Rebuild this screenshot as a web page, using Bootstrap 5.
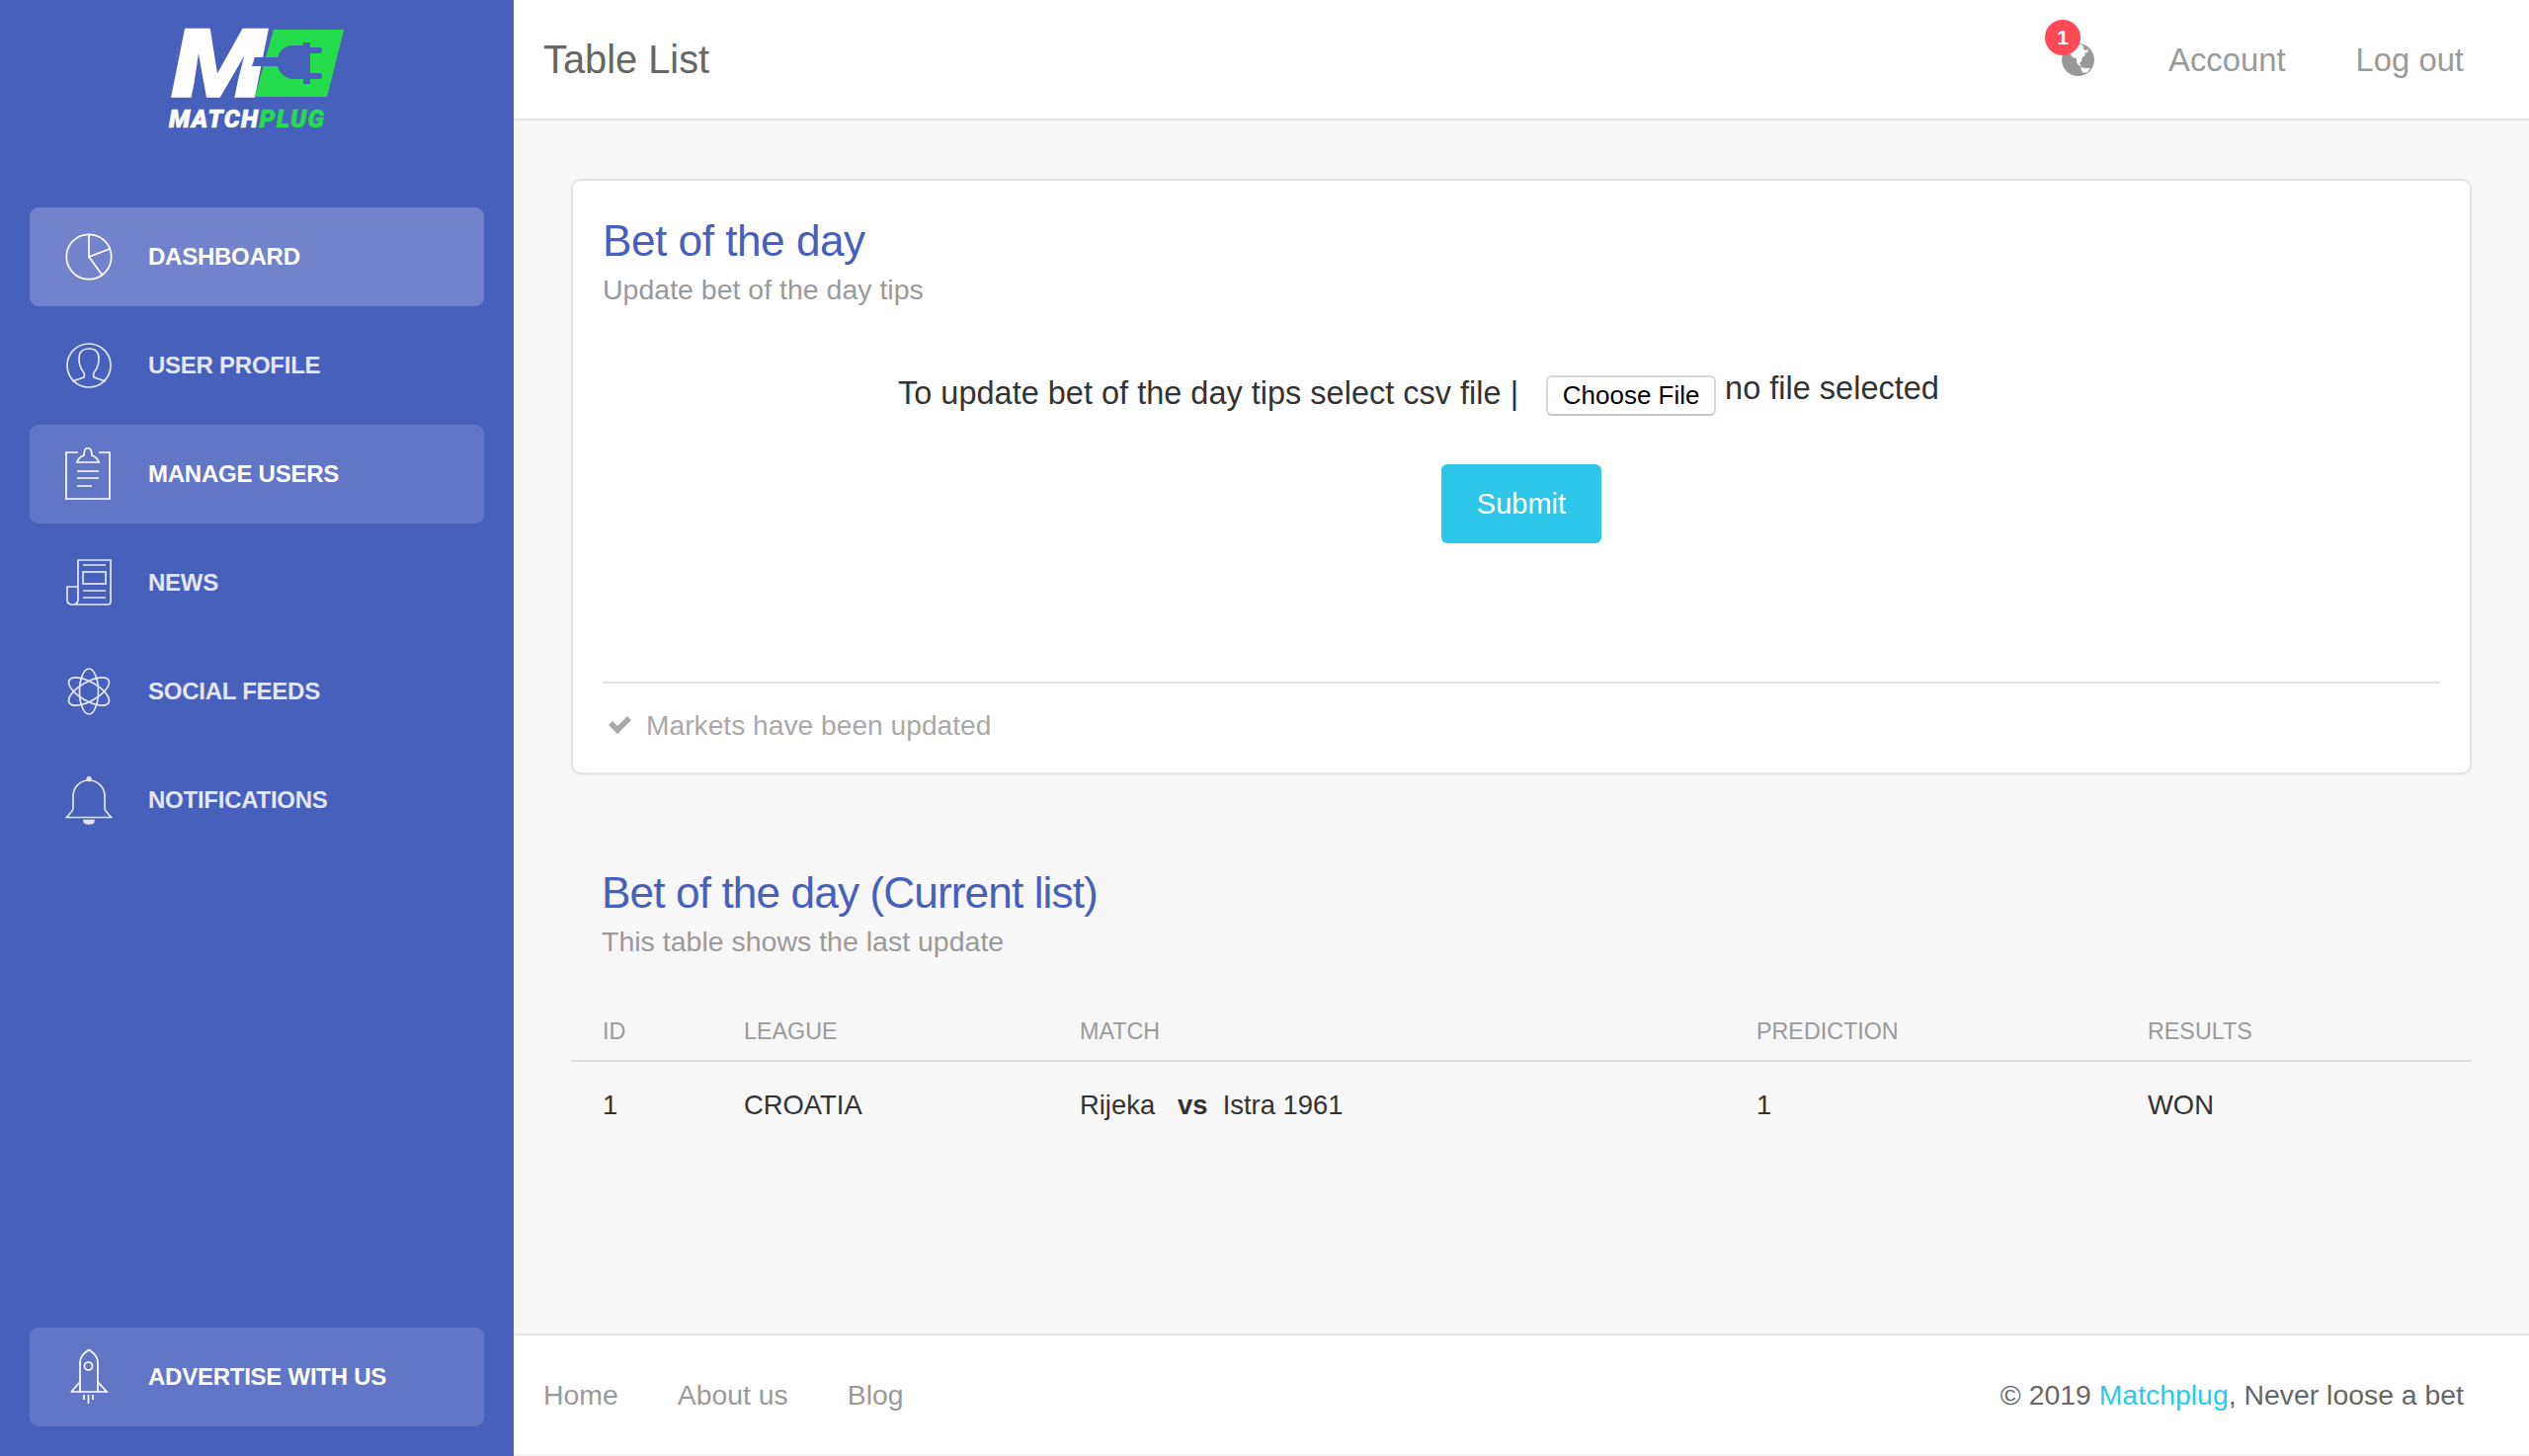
<!DOCTYPE html>
<html lang="en">
<head>
<meta charset="utf-8">
<title>Table List</title>
<link href="https://cdn.jsdelivr.net/npm/bootstrap@5.3.0/dist/css/bootstrap.min.css" rel="stylesheet">
<style>
html,body{height:100%}
body{font-family:"Liberation Sans",Arial,sans-serif;background:#f7f7f7;color:#333;font-size:28px;height:1474px;overflow:hidden}
.mp-shell{height:1474px}
.mp-main-col{min-width:0}
.mp-side{width:520px;flex:none;background:#4760bc}
.mp-logo{height:210px;padding-top:29px}
.mp-logo-wrap{position:relative;width:180px;height:108px}
.mp-logo-m{position:absolute;left:4px;top:2px;height:68px;font:italic 900 96px/68px Roboto,"Liberation Sans",sans-serif;color:#fff;-webkit-text-stroke:1.5px #fff;transform:scaleX(1.16);transform-origin:0 0}
.mp-logo-plug{position:absolute;left:0;top:0;width:180px;height:72px}
.mp-logo-name{position:absolute;left:1px;top:82px;white-space:nowrap;font:italic 900 25px/20px Roboto,"Liberation Sans",sans-serif;letter-spacing:1.4px;color:#fff;-webkit-text-stroke:.6px #fff}
.mp-logo-name span{color:#25dc4c;-webkit-text-stroke:.6px #25dc4c}
.mp-link{height:100px;padding-left:36px;border-radius:9px;color:#e3e7f5;font-weight:700;font-size:24px;letter-spacing:-.25px;text-decoration:none;gap:36px}
.mp-link svg{width:48px;height:48px;flex:none;fill:none;stroke:currentColor;stroke-width:1.7;overflow:visible}
.mp-link svg.mp-ico-tall{height:56px}
.mp-link.mp-on{background:rgba(255,255,255,.23);color:#fff}
.mp-link.mp-soft{background:rgba(255,255,255,.14);color:#fff}
.mp-nav{gap:10px;padding:0 30px}
.mp-bottom{padding:0 30px 30px}
.mp-top{height:122px;flex:none;background:#fff;border-bottom:2px solid #e5e5e5;padding:1px 66px 0 30px}
.mp-title{font-size:39.8px;color:#666;margin:0;font-weight:400}
.mp-toplink{font-size:32.8px;color:#9a9a9a;text-decoration:none}
.mp-toplink-last{margin-left:71px}
.mp-globe{position:relative;width:33px;height:33px;margin:0 75px 0 0}
.mp-globe svg{display:block}
.mp-count{position:absolute;left:-17px;top:-24px;width:36px;height:36px;border-radius:50%;background:#ff4a55;color:#fff;font-size:21px;font-weight:700;line-height:36px;text-align:center}
.mp-main{padding:59px 58px 0 58px;flex:1 1 auto;min-height:0}
.mp-card{border:2px solid #e3e3e3;border-radius:10px;background:#fff;height:603px;padding:0 30px;box-shadow:0 1px 2px rgba(0,0,0,.05)}
.mp-cardhead{padding-top:33px}
.mp-h{font-size:44.2px;color:#4760bc;margin:0;font-weight:400;line-height:56px;letter-spacing:-.5px}
.mp-h-tight{letter-spacing:-.9px}
.mp-sub{font-size:28.5px;color:#9a9a9a;margin:3px 0 0;line-height:36px}
.mp-formline{height:44px;margin-top:65px;font-size:32.5px;line-height:44px;color:#333;padding-left:299px}
.mp-choose{font:400 26px "Liberation Sans",Arial,sans-serif;color:#000;background:#fff;border:2px solid #d6d6d6;border-bottom-color:#c4c4c4;border-radius:6px;height:41px;width:172px;padding:0;margin:4px 9px 0 28px}
.mp-nofile{position:relative;top:-5px}
.mp-submitrow{margin-top:50px}
.mp-submit{width:162px;height:80px;background:#2fc7e9;color:#fff;border:0;border-radius:6px;font-size:29px;padding:1px 0 0}
.mp-submit:hover{background:#2fc7e9;color:#fff}
.mp-stats{border-top:2px solid #e3e3e3;height:92px;color:#a9a9a9;font-size:28.2px;gap:14px;padding:0 0 6px 5px}
.mp-stats svg{width:25px;height:22px;fill:#a9a9a9;flex:none}
.mp-list{padding:92px 0 0}
.mp-list-head{padding:0 31px 58px}
.mp-tbl{display:grid;grid-template-columns:143px 340px 685px 396px 1fr;padding-left:32px}
.mp-th{font-size:23.3px;color:#9a9a9a;line-height:30px;padding-bottom:14px}
.mp-tblrule{border-bottom:2px solid #ddd}
.mp-td{font-size:27.4px;color:#333;line-height:36px;padding-top:26px}
.mp-foot{height:124px;flex:none;background:#fff;border-top:2px solid #e5e5e5;border-bottom:2px solid #f5f5f5;padding:0 66px 0 30px;color:#666}
.mp-foot a{font-size:28.4px;color:#9a9a9a;text-decoration:none}
.mp-foot .mp-brand{color:#2fc7e9}
.mp-copy{font-size:28.4px}
.mp-footnav{gap:60px}
</style>
</head>
<body>
<div class="d-flex mp-shell">
  <aside class="mp-side d-flex flex-column">
    <div class="mp-logo d-flex justify-content-center">
      <div class="mp-logo-wrap">
        <span class="mp-logo-m">M</span>
        <svg class="mp-logo-plug" viewBox="0 0 180 72" aria-hidden="true">
          <polygon points="107,1 178,1 161,69 88,69" fill="#25dc4c"/>
          <path d="M88 29H111C113 21 120 17 127 17H137V14H144V19H153A3 3 0 0 1 153 25H144V45H153A3 3 0 0 1 153 51H144V56H137V51H127C120 51 113 46 111 38H85Z" fill="#4760bc"/>
        </svg>
        <div class="mp-logo-name">MATCH<span>PLUG</span></div>
      </div>
    </div>
    <nav class="mp-nav d-flex flex-column">
      <a class="mp-link mp-on d-flex align-items-center" href="#"><svg viewBox="0 0 48 48"><circle cx="24" cy="24" r="22.7"/><path d="M24 1.500V24L45 16M24 24L38 43"/></svg>DASHBOARD</a>
      <a class="mp-link d-flex align-items-center" href="#"><svg viewBox="0 0 48 48"><circle cx="24" cy="24" r="22"/><path d="M7 40L19 36C20 33 19 31 18 30C15 26 14 22 14 17C14 10 18 7 24 7C30 7 34 10 34 17C34 22 33 26 30 30C29 31 28 33 29 36L41 40"/></svg>USER PROFILE</a>
      <a class="mp-link mp-soft d-flex align-items-center" href="#"><svg viewBox="0 0 48 48"><path d="M13 2H1V49H45V2H34"/><path d="M12 12H34C33 8 30 6 27 5C27 1 26 -2.500 23 -2.500C20 -2.500 19 1 19 5C16 6 13 8 12 12Z"/><path d="M12 21H34M12 28H34M12 36H27"/></svg>MANAGE USERS</a>
      <a class="mp-link d-flex align-items-center" href="#"><svg viewBox="0 0 48 48"><path d="M13 28H2V41C2 44 4 46 7 46H43C45 46 46 45 46 43V1H13V41C13 44 11 46 7 46"/><path d="M18 6H41M18 32H41M18 39H41"/><rect x="18" y="13" width="23" height="12"/></svg>NEWS</a>
      <a class="mp-link d-flex align-items-center" href="#"><svg viewBox="0 0 48 48"><ellipse cx="24" cy="24" rx="9.500" ry="23"/><ellipse cx="24" cy="24" rx="9.500" ry="23" transform="rotate(60 24 24)"/><ellipse cx="24" cy="24" rx="9.500" ry="23" transform="rotate(120 24 24)"/></svg>SOCIAL FEEDS</a>
      <a class="mp-link d-flex align-items-center" href="#"><svg viewBox="0 0 48 48"><path d="M1.500 41.500H46.500L41 35C40 34 40 33 40 31V20C40 11 33 4 24 4C15 4 8 11 8 20V31C8 33 8 34 7 35Z"/><circle cx="24" cy="2.500" r="1.800" fill="currentColor"/><path d="M19 44.500H29C29 47 27 48 24 48C21 48 19 47 19 44.500Z" fill="currentColor"/></svg>NOTIFICATIONS</a>
    </nav>
    <div class="mp-bottom mt-auto">
      <a class="mp-link mp-soft d-flex align-items-center" href="#"><svg class="mp-ico-tall" viewBox="0 0 48 56"><path d="M15 43V13C15 8 20 3 24 0.500C28 3 33 8 33 13V43"/><circle cx="23.500" cy="17" r="4"/><path d="M6 43H42L33 33M15 33L6 43"/><path d="M19 46V51M23.500 46V55M28 46V51"/></svg>ADVERTISE WITH US</a>
    </div>
  </aside>
  <div class="mp-main-col d-flex flex-column flex-grow-1">
    <header class="mp-top d-flex align-items-center">
      <h1 class="mp-title">Table List</h1>
      <div class="ms-auto d-flex align-items-center">
        <div class="mp-globe">
          <svg viewBox="0 0 33 33" width="33" height="33"><circle cx="16.500" cy="16.500" r="16.500" fill="#999"/><path d="M12 1L20 1L23 4L21 5L24 7L27 6L26 9L23 10L24 12L21 14L20 18L18 20L20 23L17 22L15 19L15 15L11 14L9 11L6 9L9 4Z" fill="#fff"/><path d="M19 24L24 25L29 25L26 29L22 30L20 27Z" fill="#fff"/></svg>
          <span class="mp-count">1</span>
        </div>
        <a class="mp-toplink" href="#">Account</a>
        <a class="mp-toplink mp-toplink-last" href="#">Log out</a>
      </div>
    </header>
    <main class="mp-main">
      <section class="mp-card d-flex flex-column">
        <div class="mp-cardhead">
          <h2 class="mp-h">Bet of the day</h2>
          <p class="mp-sub">Update bet of the day tips</p>
        </div>
        <div class="mp-formline d-flex align-items-start">
          <span>To update bet of the day tips select csv file |</span>
          <button type="button" class="mp-choose">Choose File</button>
          <span class="mp-nofile">no file selected</span>
        </div>
        <div class="mp-submitrow d-flex justify-content-center">
          <button type="button" class="btn mp-submit">Submit</button>
        </div>
        <div class="mp-stats d-flex align-items-center mt-auto">
          <svg viewBox="0 0 25 22"><path d="M1 11L5 7L10 12L20 2L24 6L10 20Z"/></svg>
          <span>Markets have been updated</span>
        </div>
      </section>
      <section class="mp-list">
        <div class="mp-list-head">
          <h2 class="mp-h mp-h-tight">Bet of the day (Current list)</h2>
          <p class="mp-sub">This table shows the last update</p>
        </div>
        <div class="mp-tblrule">
          <div class="mp-tbl">
            <div class="mp-th">ID</div><div class="mp-th">LEAGUE</div><div class="mp-th">MATCH</div><div class="mp-th">PREDICTION</div><div class="mp-th">RESULTS</div>
          </div>
        </div>
        <div class="mp-tbl">
          <div class="mp-td">1</div><div class="mp-td">CROATIA</div><div class="mp-td">Rijeka &nbsp; <b>vs</b> &nbsp;Istra 1961</div><div class="mp-td">1</div><div class="mp-td">WON</div>
        </div>
      </section>
    </main>
    <footer class="mp-foot d-flex align-items-center justify-content-between">
      <div class="mp-footnav d-flex"><a href="#">Home</a><a href="#">About us</a><a href="#">Blog</a></div>
      <div class="mp-copy">© 2019 <a class="mp-brand" href="#">Matchplug</a>, Never loose a bet</div>
    </footer>
  </div>
</div>
<script src="https://cdn.jsdelivr.net/npm/bootstrap@5.3.0/dist/js/bootstrap.bundle.min.js"></script>
</body>
</html>
